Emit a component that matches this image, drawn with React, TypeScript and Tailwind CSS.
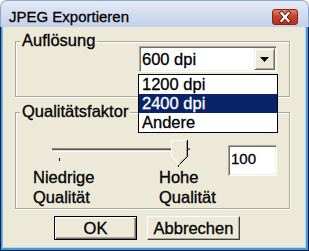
import React from "react";

function CloseIcon() {
  return (
    <svg width="26" height="16" viewBox="0 0 26 16">
      <defs>
        <linearGradient id="cg" x1="0" y1="0" x2="0" y2="1">
          <stop offset="0" stopColor="#e6876f" />
          <stop offset="0.45" stopColor="#c8452f" />
          <stop offset="1" stopColor="#b4301f" />
        </linearGradient>
      </defs>
      <rect x="0.5" y="0.5" width="25" height="15" rx="2.5" fill="url(#cg)" stroke="#8a2417" />
      <path d="M9.5 4 L16.5 12 M16.5 4 L9.5 12" stroke="#5b1a10" strokeWidth="4" strokeLinecap="square" />
      <path d="M9.5 4 L16.5 12 M16.5 4 L9.5 12" stroke="#ffffff" strokeWidth="2.2" strokeLinecap="square" />
    </svg>
  );
}

function Thumb() {
  return (
    <svg width="17" height="25" viewBox="0 0 17 25">
      <polygon points="0,0 17,0 17,16 8.5,24.5 0,16" fill="#ece9d8" />
      <path d="M0.5 16.5 V0.5 H16" stroke="#ffffff" fill="none" shapeRendering="crispEdges" />
      <path d="M0.5 16.5 L8.5 24.5" stroke="#ffffff" fill="none" />
      <path d="M16.5 0 V16.5" stroke="#000000" fill="none" shapeRendering="crispEdges" />
      <path d="M16.5 16.5 L8.5 24.5" stroke="#000000" fill="none" />
      <path d="M15.5 1 V16" stroke="#aca899" fill="none" shapeRendering="crispEdges" />
      <path d="M15.5 16.2 L8.5 23.2" stroke="#aca899" fill="none" />
    </svg>
  );
}

export default function App() {
  return (
    <div className="w-[309px] h-[251px] flex flex-col overflow-hidden text-black font-['Liberation_Sans',Arial,sans-serif] text-[16.5px] [-webkit-text-stroke:0.3px_currentColor]">
      {/* Title bar */}
      <div className="h-[27px] shrink-0 flex items-start pt-[7px] pl-[8px] pr-[10px] rounded-t-[7px] border border-b-0 border-[#8ea4cc] bg-[linear-gradient(#e4eaf5,#c3d0e8)]">
        <span className="text-[15px] leading-[17px]">JPEG Exportieren</span>
        <div className="ml-auto mt-[1px]">
          <CloseIcon />
        </div>
      </div>

      {/* Window frame */}
      <div className="flex-1 flex flex-col bg-[#0c2146] pl-[1px] pr-[1px] pb-[1px]">
        <div className="flex-1 flex flex-col bg-[#3b9be6] pl-[1px] pr-[2px] pb-[2px]">
          <div className="flex-1 flex flex-col bg-[#ece9d8] border-l border-r border-b border-[#c9cfd9] border-l-[#8fb2e6]">
            {/* Group 1 */}
            <fieldset className="mt-[4px] ml-[12px] w-[275px] h-[66px] border border-[#aca899] shadow-[inset_1px_1px_0_#ffffff,1px_1px_0_#ffffff]">
              <legend className="ml-[4px] px-[2px] leading-[18px] pb-[3px] bg-[#ece9d8]">Auflösung</legend>
              <div className="relative ml-[123px] mt-[-6px] w-[138px] h-[26px] bg-white border border-t-[#aca899] border-l-[#aca899] border-b-white border-r-white shadow-[inset_1px_1px_0_#716f64,inset_-1px_-1px_0_#f1efe2] flex items-center pl-[2px] pr-[1px] py-[1px]">
                <span className="flex-1 leading-[20px]">600 dpi</span>
                <div className="w-[21px] h-[22px] bg-[#ece9d8] border border-t-[#f1efe2] border-l-[#f1efe2] border-b-[#716f64] border-r-[#716f64] shadow-[inset_1px_1px_0_#ffffff,inset_-1px_-1px_0_#aca899] flex items-center justify-center">
                  <svg width="9" height="5" viewBox="0 0 9 5">
                    <polygon points="0,0 9,0 4.5,5" fill="#000" />
                  </svg>
                </div>
                {/* Dropdown list */}
                <div className="absolute left-[-2px] top-[27px] w-[140px] h-[59px] border border-black bg-white z-10 flex flex-col">
                  <div className="h-[19px] leading-[19px] pl-[3px]">1200 dpi</div>
                  <div className="h-[19px] leading-[19px] pl-[3px] bg-[#0a246a] text-white">2400 dpi</div>
                  <div className="h-[19px] leading-[19px] pl-[3px]">Andere</div>
                </div>
              </div>
            </fieldset>

            {/* Group 2 */}
            <fieldset className="mt-[5px] ml-[12px] w-[275px] h-[107px] border border-[#aca899] shadow-[inset_1px_1px_0_#ffffff,1px_1px_0_#ffffff]">
              <legend className="ml-[4px] px-[2px] leading-[18px] pb-[3px] bg-[#ece9d8]">Qualitätsfaktor</legend>
              <div className="flex">
                <div className="w-[212px] flex flex-col">
                  <div className="relative ml-[36px] mt-[17px] w-[138px] h-[27px]">
                    <div className="mt-[8px] h-[4px] border-t border-t-[#8c887a] border-b border-b-white bg-[#5c5a50] shadow-[inset_0_-1px_0_#dcd8c8]" />
                    <div className="absolute left-[7px] top-[18px] w-[1px] h-[3px] bg-black" />
                    <div className="absolute left-[126px] top-[25px] w-[1px] h-[2px] bg-black" />
                    <div className="absolute left-[119px] top-0">
                      <Thumb />
                    </div>
                  </div>
                  <div className="ml-[17px] grid grid-cols-[126px_auto] leading-[20px]">
                    <div>
                      Niedrige
                      <br />
                      Qualität
                    </div>
                    <div>
                      Hohe
                      <br />
                      Qualität
                    </div>
                  </div>
                </div>
                <div className="mt-[22px] w-[49px] h-[31px] bg-white border border-t-[#aca899] border-l-[#aca899] border-b-white border-r-white shadow-[inset_1px_1px_0_#716f64,inset_-1px_-1px_0_#f1efe2] pl-[2px] pt-[4px] text-[15px] leading-[17px]">
                  100
                </div>
              </div>
            </fieldset>

            {/* Buttons */}
            <div className="mt-[7px] ml-[51px] flex gap-[10px]">
              <button className="w-[83px] h-[24px] border border-black bg-[#ece9d8] shadow-[inset_1px_1px_0_#ffffff,inset_-1px_-1px_0_#716f64,inset_-2px_-2px_0_#aca899] leading-[20px]">
                OK
              </button>
              <button className="w-[93px] h-[24px] border border-t-white border-l-white border-b-[#404040] border-r-[#404040] bg-[#ece9d8] shadow-[inset_-1px_-1px_0_#aca899] leading-[20px]">
                Abbrechen
              </button>
            </div>
          </div>
        </div>
      </div>
    </div>
  );
}
